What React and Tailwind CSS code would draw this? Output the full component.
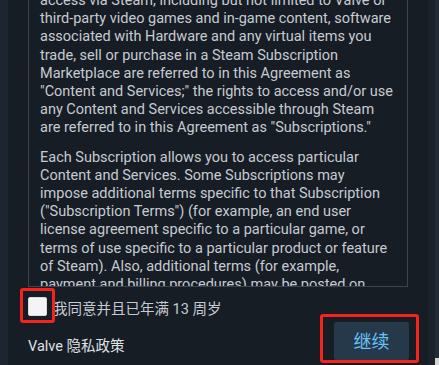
import React from 'react';

const para1 = [
  'access via Steam, including but not limited to Valve or',
  'third-party video games and in-game content, software',
  'associated with Hardware and any virtual items you',
  'trade, sell or purchase in a Steam Subscription',
  'Marketplace are referred to in this Agreement as',
  '"Content and Services;" the rights to access and/or use',
  'any Content and Services accessible through Steam',
  'are referred to in this Agreement as "Subscriptions."',
];

const para2 = [
  'Each Subscription allows you to access particular',
  'Content and Services. Some Subscriptions may',
  'impose additional terms specific to that Subscription',
  '("Subscription Terms") (for example, an end user',
  'license agreement specific to a particular game, or',
  'terms of use specific to a particular product or feature',
  'of Steam). Also, additional terms (for example,',
  'payment and billing procedures) may be posted on',
];

const font = { fontFamily: 'Roboto, "Noto Sans CJK SC", sans-serif' };

const Lines = ({ lines, className = '' }) => (
  <p className={className}>
    {lines.map((l, i) => (
      <span key={i} className="block whitespace-nowrap">{l}</span>
    ))}
  </p>
);

export default function App() {
  return (
    <div className="w-[439px] h-[365px] flex bg-[#1c2530] overflow-hidden" style={font}>
      <div className="w-[8px] shrink-0" />

      {/* dialog */}
      <div className="w-[420px] shrink-0 bg-[#171d25] flex flex-col pl-[20px]">
        <div className="w-[380px] h-[287px] border border-t-0 border-[#3b4451] overflow-hidden">
          <div className="px-[11px] -mt-[8px] text-[14.5px] leading-[18.2px] text-[#c6cbd1]">
            <Lines lines={para1} className="mb-[11px]" />
            <Lines lines={para2} />
          </div>
        </div>

        {/* agree checkbox */}
        <div className="mt-[10px] h-[19px] flex items-end gap-[6px] relative">
          <div className="w-[19px] h-[19px] rounded-[2px] bg-[#f4f4f4] border border-[#d9d9d9] shrink-0" />
          <span className="text-[14.5px] leading-[18px] text-[#c6cbd1] -mb-[3px] whitespace-nowrap">
            我同意并且已年满 13 周岁
          </span>
          <div className="absolute -left-[8px] -top-[9px] w-[35px] h-[35px] border-[3px] border-[#f5231c] rounded-[3px]" />
        </div>

        {/* footer */}
        <div className="mt-[6px] flex justify-between items-end w-[381px]">
          <span className="text-[14.5px] leading-[18px] text-[#dfe1e3] mb-[4px]">Valve 隐私政策</span>
          <div className="relative">
            <button className="w-[75px] h-[38px] rounded-[2px] bg-[#25394b] text-[#67c1f5] text-[18px] flex items-center justify-center">
              继续
            </button>
            <div className="absolute -left-[14px] -top-[8px] w-[99px] h-[49px] border-[3px] border-[#f5231c] rounded-[3px]" />
          </div>
        </div>
      </div>

      <div className="w-[7px] shrink-0 bg-[#1a222c]" />
      <div className="w-[4px] shrink-0 bg-[#222b36] flex flex-col justify-end">
        <div className="h-[7px] bg-[#d6d6d6]" />
      </div>
    </div>
  );
}
